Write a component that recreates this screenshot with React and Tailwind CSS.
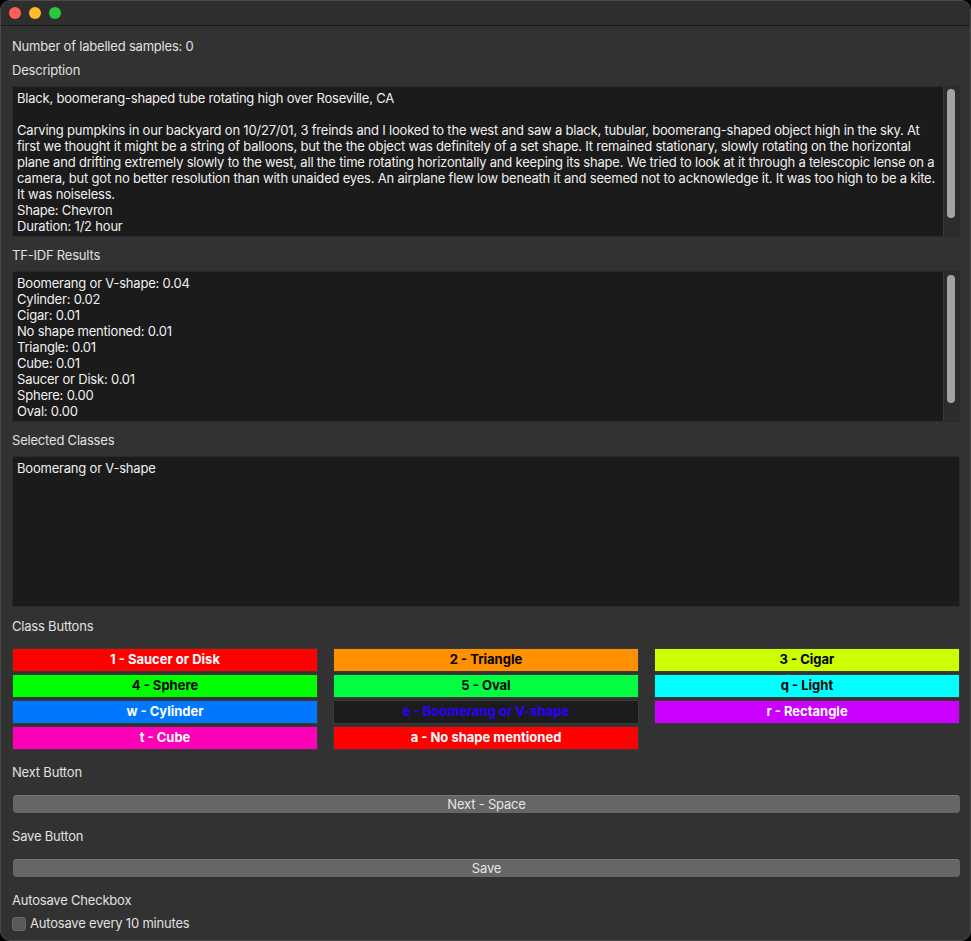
import React, { useState } from "react";

const description = [
  "Black, boomerang-shaped tube rotating high over Roseville, CA",
  "",
  "Carving pumpkins in our backyard on 10/27/01, 3 freinds and I looked to the west and saw a black, tubular, boomerang-shaped object high in the sky. At",
  "first we thought it might be a string of balloons, but the the object was definitely of a set shape. It remained stationary, slowly rotating on the horizontal",
  "plane and drifting extremely slowly to the west, all the time rotating horizontally and keeping its shape. We tried to look at it through a telescopic lense on a",
  "camera, but got no better resolution than with unaided eyes. An airplane flew low beneath it and seemed not to acknowledge it. It was too high to be a kite.",
  "It was noiseless.",
  "Shape: Chevron",
  "Duration: 1/2 hour",
];

const tfidf = [
  "Boomerang or V-shape: 0.04",
  "Cylinder: 0.02",
  "Cigar: 0.01",
  "No shape mentioned: 0.01",
  "Triangle: 0.01",
  "Cube: 0.01",
  "Saucer or Disk: 0.01",
  "Sphere: 0.00",
  "Oval: 0.00",
];

const classButtons = [
  { label: "1 - Saucer or Disk", cls: "bg-[#ff0000] text-white" },
  { label: "2 - Triangle", cls: "bg-[#ff9000] text-black" },
  { label: "3 - Cigar", cls: "bg-[#ccff00] text-black" },
  { label: "4 - Sphere", cls: "bg-[#00ff00] text-black" },
  { label: "5 - Oval", cls: "bg-[#00ff40] text-black" },
  { label: "q - Light", cls: "bg-[#00ffff] text-black" },
  { label: "w - Cylinder", cls: "bg-[#0077ff] text-white" },
  { label: "e - Boomerang or V-shape", cls: "bg-[#1c1c1c] text-[#2a00ff] border-[#0a0a0a]" },
  { label: "r - Rectangle", cls: "bg-[#cc00ff] text-white" },
  { label: "t - Cube", cls: "bg-[#ff00b8] text-white" },
  { label: "a - No shape mentioned", cls: "bg-[#ff0000] text-white" },
];

function Label({ children, className = "" }) {
  return <div className={"h-4 leading-4 text-[#e0e0e0] " + className}>{children}</div>;
}

function TextBox({ lines, thumbTop, thumbHeight, scroll = true }) {
  return (
    <div className="relative h-[151px] bg-[#1b1b1b] border border-[#2a2a2a] overflow-hidden">
      <div className="pl-[4px] pt-[3px] pr-6 text-[#f0f0f0] whitespace-pre leading-4">
        {lines.map((l, i) => (
          <div key={i} className="h-4">{l}</div>
        ))}
      </div>
      {scroll && (
        <div className="absolute top-0 right-0 bottom-0 w-[16px] bg-[#2c2c2c] border-l border-[#3a3a3a]">
          <div
            className="absolute left-[3px] w-[8px] rounded-full bg-[#a3a3a3]"
            style={{ top: thumbTop, height: thumbHeight }}
          />
        </div>
      )}
    </div>
  );
}

export default function App() {
  const [autosave, setAutosave] = useState(false);

  return (
    <div className="w-[971px] h-[941px] bg-black" style={{ fontFamily: "Inter, 'Noto Sans', sans-serif" }}>
      <div className="w-full h-full bg-[#323232] rounded-[10px] border border-[#4a4a4a] overflow-hidden text-[13px] tracking-[-0.2px]">
        {/* Title bar */}
        <div className="h-[25px] bg-[#2e2e2e] border-b border-[#1a1a1a] flex items-center gap-[8px] pl-[8px]">
          <span className="w-[12px] h-[12px] rounded-full bg-[#fe5f57]" />
          <span className="w-[12px] h-[12px] rounded-full bg-[#febc2e]" />
          <span className="w-[12px] h-[12px] rounded-full bg-[#28c840]" />
        </div>

        <div className="pl-[11px] pr-[10px] pt-[12px] flex flex-col">
          <Label>Number of labelled samples: 0</Label>
          <Label className="mt-[8px]">Description</Label>
          <div className="mt-[8px]">
            <TextBox lines={description} thumbTop={2} thumbHeight={129} />
          </div>

          <Label className="mt-[10px]">TF-IDF Results</Label>
          <div className="mt-[8px]">
            <TextBox lines={tfidf} thumbTop={3} thumbHeight={128} />
          </div>

          <Label className="mt-[10px]">Selected Classes</Label>
          <div className="mt-[8px]">
            <TextBox lines={["Boomerang or V-shape"]} scroll={false} />
          </div>

          <Label className="mt-[11px]">Class Buttons</Label>
          <div className="mt-[14px] grid grid-cols-3 gap-x-[15px] gap-y-[2px]">
            {classButtons.map((b) => (
              <button
                key={b.label}
                className={"h-[24px] border border-[#3a3a3a] font-bold text-[13px] tracking-normal flex items-center justify-center " + b.cls}
              >
                {b.label}
              </button>
            ))}
          </div>

          <Label className="mt-[14px]">Next Button</Label>
          <button className="mt-[15px] ml-[1px] h-[18px] rounded-[4px] bg-[#666666] border-t border-[#777777] text-[#e4e4e4] flex items-center justify-center">
            Next - Space
          </button>

          <Label className="mt-[15px]">Save Button</Label>
          <button className="mt-[15px] ml-[1px] h-[18px] rounded-[4px] bg-[#666666] border-t border-[#777777] text-[#e4e4e4] flex items-center justify-center">
            Save
          </button>

          <Label className="mt-[15px]">Autosave Checkbox</Label>
          <label className="mt-[8px] flex items-center gap-[4px] h-4 text-[#e0e0e0]">
            <span
              onClick={() => setAutosave(!autosave)}
              className="w-[14px] h-[14px] rounded-[3px] bg-[#5a5a5a] border border-[#666666]"
            />
            Autosave every 10 minutes
          </label>
        </div>
      </div>
    </div>
  );
}
